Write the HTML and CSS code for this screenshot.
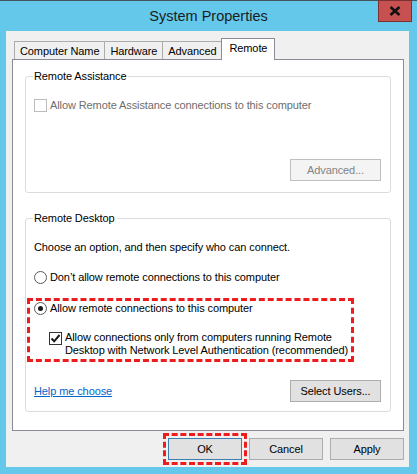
FILE: index.html
```html
<!doctype html>
<html>
  <head>
    <meta charset="utf-8">
    <title>System Properties</title>
    <link rel="stylesheet" href="styles.css">
  </head>
<body>
<div class="window">
  <div class="titlebar">
    <span class="title">System Properties</span>
    <span class="close">
      <svg width="12" height="10" viewBox="0 0 12 10"><path d="M1.5 1 L10.5 9 M10.5 1 L1.5 9" stroke="#111" stroke-width="2.6" fill="none"/></svg>
    </span>
  </div>

  <div class="client">
    <div class="tabs">
      <span class="tab">Computer Name</span>
      <span class="tab">Hardware</span>
      <span class="tab">Advanced</span>
      <span class="tab active">Remote</span>
    </div>

    <div class="panel">
      <fieldset class="group assist">
        <legend>Remote Assistance</legend>
        <div class="option disabled"><span class="check"></span>Allow Remote Assistance connections to this computer</div>
        <div class="group_actions">
          <span class="btn disabled">Advanced...</span>
        </div>
      </fieldset>

      <fieldset class="group desktop">
        <legend>Remote Desktop</legend>
        <div class="hint">Choose an option, and then specify who can connect.</div>
        <div class="option"><span class="radio"></span>Don’t allow remote connections to this computer</div>
        <div class="highlight">
          <div class="option"><span class="radio on"></span>Allow remote connections to this computer</div>
          <div class="option sub">
            <span class="check on">
              <svg width="11" height="11" viewBox="0 0 11 11"><path d="M1.5 5.5 L4.2 8.3 L9.5 2" stroke="#1a1a1a" stroke-width="2" fill="none"/></svg>
            </span>
            <span>Allow connections only from computers running Remote<br>Desktop with Network Level Authentication (recommended)</span>
          </div>
        </div>
        <div class="group_actions split">
          <a class="link" href="#">Help me choose</a>
          <span class="btn">Select Users...</span>
        </div>
      </fieldset>
    </div>

    <div class="footer">
      <span class="btn default">OK</span>
      <span class="btn">Cancel</span>
      <span class="btn">Apply</span>
    </div>
  </div>
</div>
</body>
</html>
```

FILE: styles.css
```css
html, body {
  margin: 0;
  height: 100%;
}

body {
  background-color: #63c8ea;
  font-family: "Liberation Sans", Arial, sans-serif;
  font-size: 11px;
  letter-spacing: -0.1px;
  color: #000000;
}

/* title bar */
.titlebar {
  display: grid;
  grid-template-columns: 1fr auto 1fr;
  height: 31px;
  box-sizing: border-box;
  border-top: 1px solid #46555c;
}

.title {
  grid-column: 2;
  align-self: center;
  font-size: 14.5px;
  letter-spacing: 0;
  color: #1c1c1c;
  margin-top: -1px;
}

.close {
  grid-column: 3;
  justify-self: end;
  display: flex;
  align-items: center;
  justify-content: center;
  width: 34px;
  height: 22px;
  box-sizing: border-box;
  margin: -1px 5px 0 0;
  background-color: #c75050;
  border: 1px solid #7d3030;
}

/* dialog body */
.client {
  margin: 0 8px 0 6px;
  height: 436px;
  background-color: #f0f0f0;
}

.tabs {
  display: flex;
  align-items: flex-end;
  height: 28px;
  padding-left: 8px;
  position: relative;
  z-index: 1;
}

.tab {
  height: 17px;
  line-height: 18px;
  padding: 0 5px;
  margin-left: -1px;
  background-color: #f0f0f0;
  border: 1px solid #acacac;
  border-bottom: none;
  white-space: nowrap;
}

.tab:first-child { margin-left: 0; }

.tab.active {
  height: 21px;
  line-height: 19px;
  margin-bottom: -1px;
  padding: 0 7px;
  background-color: #ffffff;
  border-color: #898c95;
}

.panel {
  margin-left: 6px;
  width: 392px;
  box-sizing: border-box;
  background-color: #ffffff;
  border: 1px solid #898c95;
  padding: 9px 12px 18px 12px;
}

/* group boxes */
.group {
  margin: 0;
  padding: 15px 9px 11px 8px;
  border: 1px solid #dcdcdc;
  border-radius: 3px;
}

.group + .group {
  margin-top: 18px;
  padding-bottom: 9px;
}

.group legend {
  line-height: 14px;
  margin-left: -1px;
  padding: 0 2px 0 1px;
}

.option {
  display: flex;
  align-items: center;
  line-height: 15px;
  white-space: nowrap;
}

.option.disabled { color: #6d6d6d; }

.option.sub {
  align-items: flex-start;
  line-height: 13px;
  margin-top: 15px;
  padding-left: 15px;
}

.check, .radio {
  flex: none;
  display: flex;
  align-items: center;
  justify-content: center;
  width: 13px;
  height: 13px;
  box-sizing: border-box;
  margin-right: 3px;
  background-color: #ffffff;
  border: 1px solid #333333;
}

.option.disabled .check { border-color: #bcbcbc; }

.option.sub .check { margin-top: 1px; }

.radio {
  border-radius: 50%;
  border-color: #5a5a5a;
}

.radio.on::after {
  content: "";
  width: 5px;
  height: 5px;
  border-radius: 50%;
  background-color: #1a1a1a;
}

.hint {
  line-height: 15px;
  margin-bottom: 15px;
}

.highlight {
  margin: 13px 0 0 -7px;
  width: 327px;
  box-sizing: border-box;
  padding: 0 0 2px 4px;
  border: 3px dashed #ee1c1c;
}

.group_actions {
  display: flex;
  justify-content: flex-end;
  align-items: center;
  margin-top: 46px;
}

.group_actions.split {
  justify-content: space-between;
  margin-top: 18px;
}

.link {
  color: #0066cc;
  text-decoration: underline;
}

/* push buttons */
.btn {
  display: inline-flex;
  align-items: center;
  justify-content: center;
  height: 22px;
  width: 91px;
  box-sizing: border-box;
  background-color: #e1e1e1;
  border: 1px solid #adadad;
}

.btn.disabled {
  color: #838383;
  background-color: #f4f4f4;
  border-color: #bfbfbf;
}

.footer {
  display: flex;
  justify-content: flex-end;
  gap: 7px;
  padding: 7px 5px 0 0;
}

.footer .btn { width: 74px; }

.btn.default {
  border-color: #3c7fb1;
  outline: 3px dashed #ee1c1c;
  outline-offset: 2px;
}
```
